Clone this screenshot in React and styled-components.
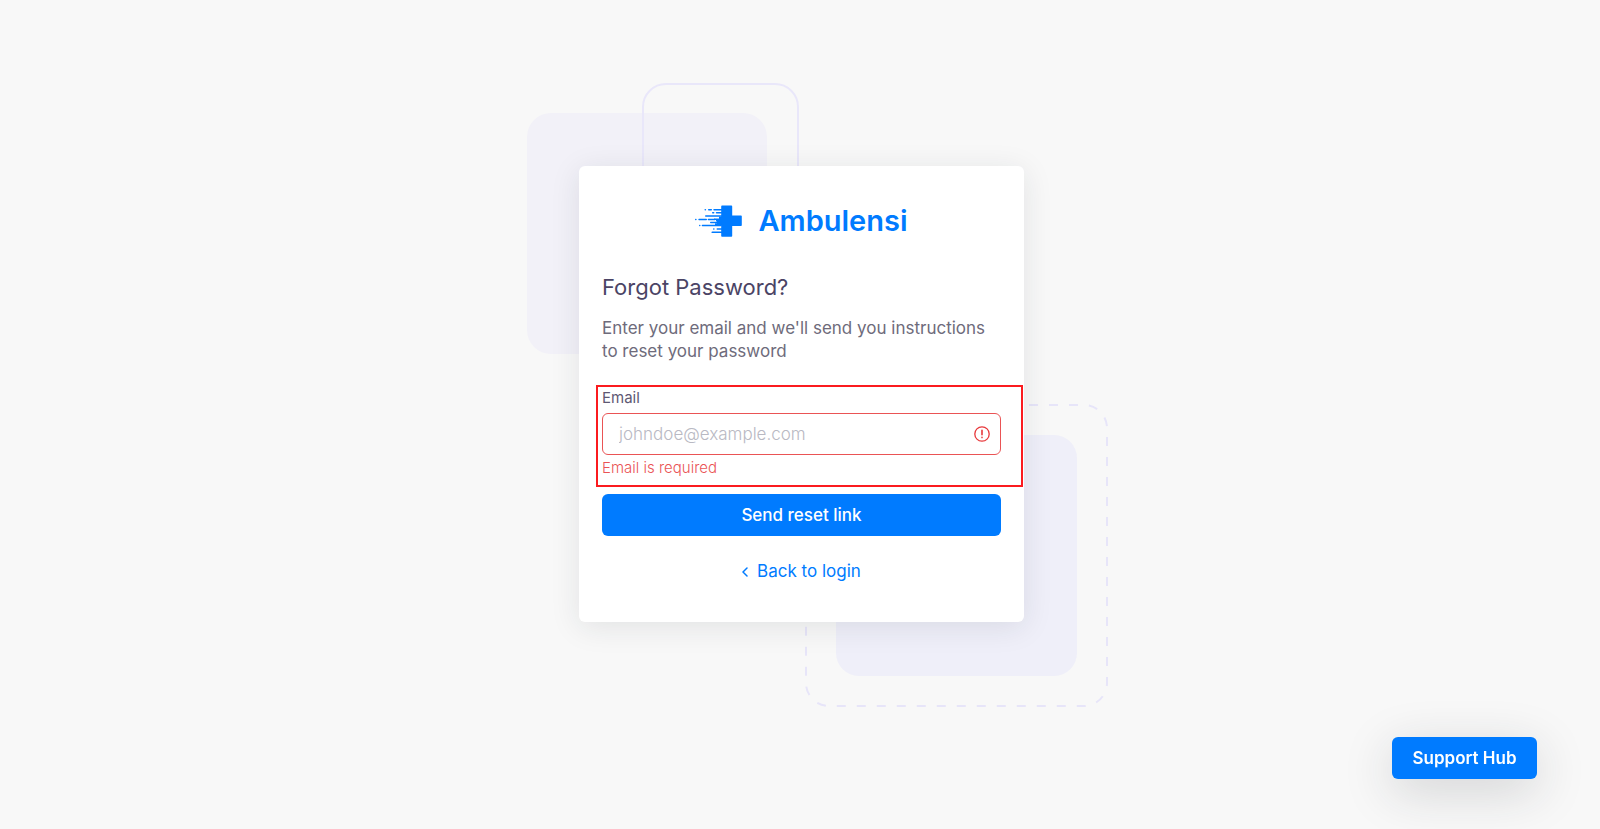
import React, { useState } from "react";
import styled, { createGlobalStyle } from "styled-components";

const GlobalStyle = createGlobalStyle`
  *, *::before, *::after {
    box-sizing: border-box;
  }

  body {
    margin: 0;
    background: #f8f8f8;
    color: #6e6b7b;
    font-family: Inter, "Open Sans", sans-serif;
    font-size: 17px;
    font-weight: 400;
    line-height: 23px;
  }
`;

const Page = styled.main`
  display: flex;
  align-items: center;
  justify-content: center;
  min-height: 100vh;
  padding: 24px 13px 65px 16px;
`;

const Stage = styled.div`
  position: relative;
  width: 100%;
  max-width: 445px;
`;

const Shapes = styled.svg`
  position: absolute;
  ${(props) => (props.$corner === "top" ? "top: -84px; left: -52px;" : "right: -85px; bottom: -85px;")}
`;

const Card = styled.section`
  position: relative;
  padding: 37px 23px 39px;
  background: #fff;
  border-radius: 6px;
  box-shadow: 0 5px 30px rgba(34, 41, 47, 0.1);
`;

const Brand = styled.a`
  display: flex;
  align-items: center;
  justify-content: center;
  gap: 16px;
  margin-bottom: 35px;
  color: #007bff;
  font-size: 29px;
  font-weight: 600;
  line-height: 36px;
  text-decoration: none;
`;

const Title = styled.h1`
  margin: 0 0 16px;
  color: #4b4465;
  font-size: 22px;
  font-weight: 400;
  line-height: 27px;
`;

const Intro = styled.p`
  margin: 0 0 22px;
`;

const Field = styled.div`
  display: flex;
  flex-direction: column;
  margin: 0 -22px 7px -6px;
  padding: 1px 20px 8px 4px;
  border: 2px solid #fb1b1f;
`;

const Label = styled.label`
  margin-bottom: 5px;
  color: #5e5873;
  font-size: 15px;
  line-height: 20px;
`;

const InputBox = styled.div`
  display: flex;
  align-items: center;
  height: 42px;
  padding: 0 10px 0 16px;
  border: 1px solid #ea5455;
  border-radius: 6px;
`;

const Input = styled.input`
  flex: 1;
  min-width: 0;
  padding: 0;
  border: 0;
  outline: 0;
  background: transparent;
  color: #6e6b7b;
  font: inherit;
  font-weight: 300;

  &::placeholder {
    color: #b9b9c3;
    opacity: 1;
  }
`;

const ErrorText = styled.small`
  margin-top: 3px;
  margin-bottom: -1px;
  color: #ea5455;
  font-size: 15px;
  font-weight: 300;
  line-height: 20px;
`;

const Button = styled.button`
  height: 42px;
  padding: 0 20px;
  border: 0;
  border-radius: 6px;
  background: #007bff;
  color: #fff;
  font: inherit;
  font-weight: ${(props) => props.$weight || 500};
  cursor: pointer;
`;

const SubmitButton = styled(Button)`
  width: 100%;
`;

const SupportButton = styled(Button)`
  position: fixed;
  right: 63px;
  bottom: 50px;
  min-width: 145px;
  box-shadow: 0 12px 50px rgba(34, 41, 47, 0.18);
`;

const BackLink = styled.a`
  display: flex;
  align-items: center;
  justify-content: center;
  gap: 9px;
  margin-top: 24px;
  color: #007bff;
  text-decoration: none;
`;

// dashes trailing off the left side of the cross: [x, y, width]
const trails = [
  [9.5, 3.9, 1.6], [13, 3.9, 4], [18.3, 3.9, 9],
  [17, 6.9, 2.4], [20.8, 6.9, 7],
  [10, 10.3, 18],
  [0, 13.8, 1.6], [3.3, 13.8, 8.7], [12.7, 13.8, 8],
  [15, 16.8, 12],
  [4, 19.8, 1.5], [6.7, 19.8, 20],
  [18, 23.3, 1.6], [21.5, 23.3, 7],
  [16.5, 26.6, 11],
];

const LogoMark = () => (
  <svg width="47" height="32" viewBox="0 0 47 32" fill="#007bff" aria-hidden="true">
    <path d="M27 .6h9.4a.8.8 0 0 1 .8.8v9.1H46a.8.8 0 0 1 .8.8v9a.8.8 0 0 1-.8.8h-8.8V31a.8.8 0 0 1-.8.8H27a.8.8 0 0 1-.8-.8V20.500H20v-2.300h2v-1.800h-1v-1.500h-2v-1.300h5v-2h2.200V1.400A.8.8 0 0 1 27 .6z" />
    {trails.map(([x, y, width]) => (
      <rect key={`${x}-${y}`} x={x} y={y} width={width} height="1.5" rx=".7" />
    ))}
  </svg>
);

const TopShapes = () => (
  <Shapes $corner="top" width="273" height="273" aria-hidden="true">
    <rect y="31" width="240" height="241" rx="24" fill="#f2f1f8" />
    <rect x="116" y="2" width="155" height="155" rx="23" fill="none" stroke="#e9e7fa" strokeWidth="2" />
  </Shapes>
);

const BottomShapes = () => (
  <Shapes $corner="bottom" width="304" height="304" aria-hidden="true">
    <rect x="31" y="32" width="241" height="241" rx="23" fill="#efeff9" />
    <rect
      x="1"
      y="2"
      width="301"
      height="301"
      rx="23"
      fill="none"
      stroke="#e7e5f9"
      strokeWidth="2"
      strokeDasharray="9 11"
    />
  </Shapes>
);

const AlertIcon = () => (
  <svg width="16" height="16" viewBox="0 0 16 16" fill="none" stroke="#e8393c" strokeLinecap="round" aria-hidden="true">
    <circle cx="8" cy="8" r="7.2" strokeWidth="1.3" />
    <path d="M8 4.3v4.500M8 11.400v.2" strokeWidth="1.6" />
  </svg>
);

const ChevronIcon = () => (
  <svg width="6" height="10" viewBox="0 0 6 10" fill="none" stroke="currentColor" strokeWidth="1.5" strokeLinecap="round" strokeLinejoin="round" aria-hidden="true">
    <path d="M5 1 1 5l4 4" />
  </svg>
);

const App = () => {
  const [email, setEmail] = useState("");

  return (
    <>
      <GlobalStyle />
      <Page>
        <Stage>
          <TopShapes />
          <BottomShapes />
          <Card>
            <Brand href="#">
              <LogoMark />
              Ambulensi
            </Brand>
            <Title>Forgot Password?</Title>
            <Intro>Enter your email and we'll send you instructions to reset your password</Intro>
            <form noValidate onSubmit={(e) => e.preventDefault()}>
              <Field>
                <Label htmlFor="email">Email</Label>
                <InputBox>
                  <Input
                    id="email"
                    type="email"
                    placeholder="johndoe@example.com"
                    value={email}
                    onChange={(e) => setEmail(e.target.value)}
                    aria-invalid={!email}
                    aria-describedby="email-error"
                  />
                  <AlertIcon />
                </InputBox>
                <ErrorText id="email-error">Email is required</ErrorText>
              </Field>
              <SubmitButton type="submit">Send reset link</SubmitButton>
            </form>
            <BackLink href="#login">
              <ChevronIcon />
              Back to login
            </BackLink>
          </Card>
        </Stage>
      </Page>
      <SupportButton type="button" $weight={600}>Support Hub</SupportButton>
    </>
  );
};

export default App;
